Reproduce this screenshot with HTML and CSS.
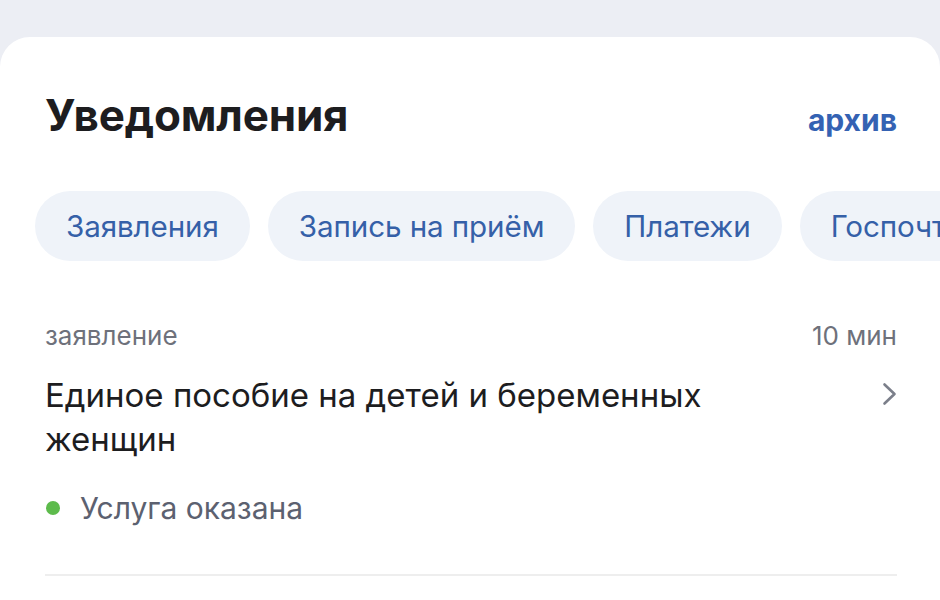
FILE: index.html
```html
<!DOCTYPE html>
<html lang="ru">
<head>
<meta charset="utf-8">
<link rel="stylesheet" href="styles.css">
</head>
<body>
<div class="card">
  <div class="header">
    <h1 class="title">Уведомления</h1>
    <a class="archive">архив</a>
  </div>
  <div class="chips">
    <span class="chip">Заявления</span>
    <span class="chip">Запись на приём</span>
    <span class="chip">Платежи</span>
    <span class="chip">Госпочта</span>
  </div>
  <div class="item">
    <div class="meta">
      <span>заявление</span>
      <span>10 мин</span>
    </div>
    <div class="row">
      <div class="name">Единое пособие на детей и беременных женщин</div>
      <svg class="chev" width="16" height="24" viewBox="0 0 16 24"><path d="M3.5 2.5 L13.5 12 L3.5 21.5" fill="none" stroke="#7b7f8a" stroke-width="2.6" stroke-linecap="round" stroke-linejoin="round"/></svg>
    </div>
    <div class="status"><span class="dot"></span>Услуга оказана</div>
  </div>
  <div class="divider"></div>
</div>
</body>
</html>
```

FILE: styles.css
```css
html, body {
  margin: 0;
  padding: 0;
  background: #eceef4;
  font-family: Inter, "Noto Sans", sans-serif;
  overflow: hidden;
}
.card {
  margin-top: 37px;
  background: #fff;
  border-radius: 30px 30px 0 0;
  padding: 0 43px 0 45px;
  height: 563px;
  box-sizing: border-box;
  overflow: hidden;
}
.header {
  display: flex;
  justify-content: space-between;
  align-items: baseline;
  padding-top: 50px;
}
.title {
  margin: 0;
  font-size: 44px;
  line-height: 56px;
  font-weight: 700;
  color: #1d1d1f;
  letter-spacing: -0.2px;
}
.archive {
  font-size: 30px;
  font-weight: 700;
  color: #3462b3;
}
.chips {
  display: flex;
  gap: 18px;
  margin: 48px -43px 0 -10px;
  white-space: nowrap;
  overflow: hidden;
}
.chip {
  flex: none;
  height: 70px;
  line-height: 70px;
  padding: 0 31px;
  border-radius: 35px;
  background: #eff3f9;
  color: #3560a8;
  font-size: 29.6px;
  letter-spacing: -0.1px;
}
.item {
  padding-top: 59px;
}
.meta {
  display: flex;
  justify-content: space-between;
  font-size: 26px;
  line-height: 32px;
  color: #6e717b;
}
.row {
  display: flex;
  justify-content: space-between;
  align-items: flex-start;
  margin-top: 21px;
}
.name {
  font-size: 33px;
  line-height: 44px;
  color: #1d1d1f;
  width: 740px;
}
.chev {
  margin-top: 9px;
}
.status {
  display: flex;
  align-items: center;
  gap: 20px;
  margin-top: 27px;
  font-size: 30px;
  line-height: 40px;
  color: #5c6170;
}
.dot {
  width: 14px;
  height: 14px;
  border-radius: 50%;
  background: #5dbb4c;
  margin-left: 1px;
}
.divider {
  margin-top: 46px;
  height: 2px;
  background: #eeeeee;
}
```
